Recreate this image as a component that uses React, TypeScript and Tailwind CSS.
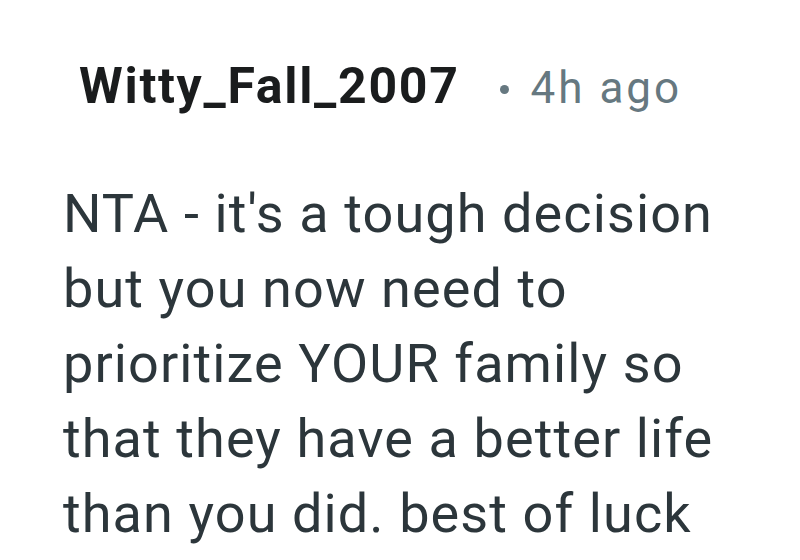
export default function App() {
    return (
        <div className="w-[800px] h-[560px] overflow-hidden bg-white font-['Roboto',sans-serif]">
            <div className="flex items-baseline pl-[79px] pt-[58px]">
                <span className="text-[50px] leading-[56px] font-bold tracking-[1.7px] text-[#1a1c1d]">Witty_Fall_2007</span>
                <span className="ml-[40px] mr-[22px] w-[9px] h-[9px] rounded-full bg-[#667880] self-center translate-y-[2px]" />
                <span className="text-[44px] leading-[56px] tracking-[3px] text-[#667880]">4h ago</span>
            </div>
            <p className="pl-[63px] mt-[60px] text-[54px] leading-[75px] tracking-[1.1px] text-[#2c363b] whitespace-nowrap">
                NTA - it's a tough decision
                <br />
                but you now need to
                <br />
                prioritize YOUR family so
                <br />
                that they have a better life
                <br />
                than you did. best of luck
            </p>
        </div>
    );
}
